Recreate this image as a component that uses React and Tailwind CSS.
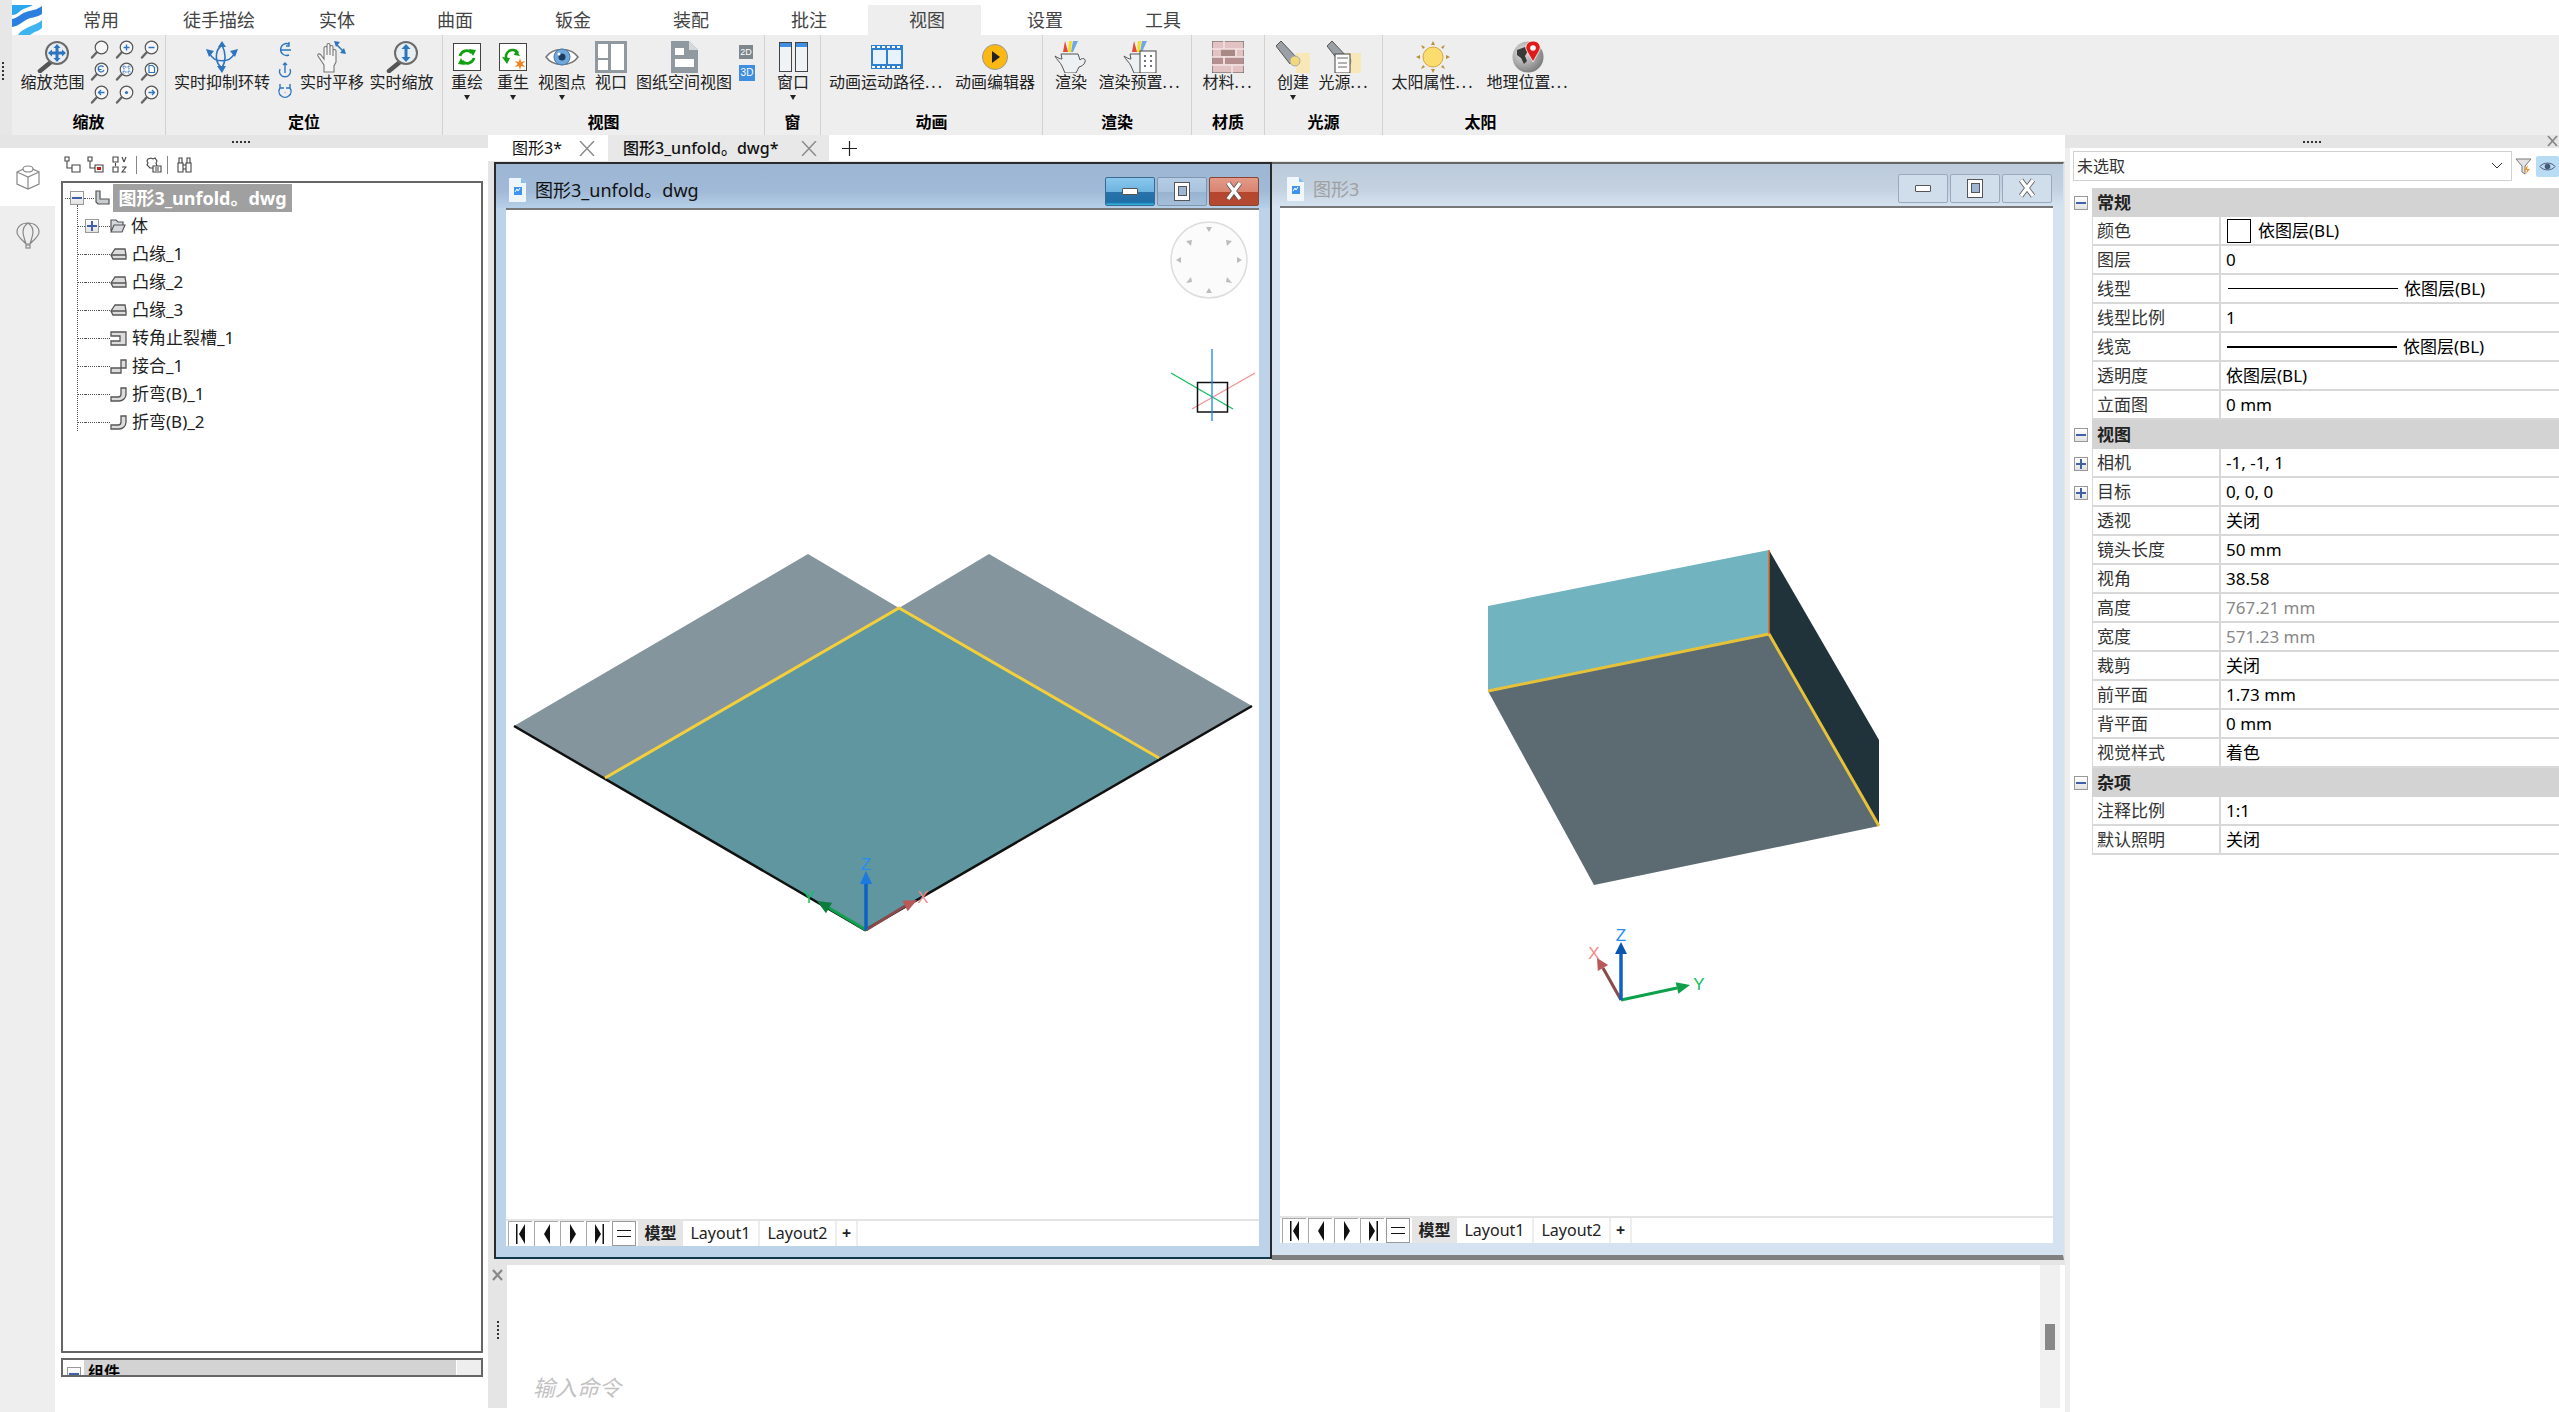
import React from "react";

const FONT = "font-['Noto_Sans','Noto_Sans_CJK_SC',sans-serif]";

// ---- small icons ----
const Mag = ({ children }) => (
  <svg width="19" height="19" viewBox="0 0 19 19">
    <line x1="7" y1="12" x2="2" y2="17.5" stroke="#666" strokeWidth="2.4" strokeLinecap="round" />
    <circle cx="11.5" cy="7.5" r="6.3" fill="#f6f6f6" stroke="#555" strokeWidth="1.2" />
    {children}
  </svg>
);

const smallMags = [
  null,
  <path d="M8.5 7.5h6M11.5 4.5v6" stroke="#2e75c0" strokeWidth="1.4" />,
  <path d="M8.5 7.5h6" stroke="#2e75c0" strokeWidth="1.5" />,
  <path d="M13.5 5a3 3 0 1 0 .5 3M8.5 4.5v3h3" fill="none" stroke="#2e75c0" strokeWidth="1.2" />,
  <path d="M7.5 5h8M7.5 10h8M9 3.5v8M14 3.5v8" stroke="#2e75c0" strokeWidth="1" strokeDasharray="1.5 1" />,
  <path d="M9 3.5h3.5l2 2v5H9z" fill="#fff" stroke="#2e75c0" strokeWidth="1.2" />,
  <path d="M14.5 7.5h-6M11 5l-2.5 2.5L11 10" fill="none" stroke="#2e75c0" strokeWidth="1.3" />,
  <circle cx="11.5" cy="7.5" r="1.6" fill="#2e75c0" />,
  <path d="M8.5 7.5h6M12 5l2.5 2.5L12 10" fill="none" stroke="#2e75c0" strokeWidth="1.3" />,
];

const BigZoom = () => (
  <svg width="34" height="32" viewBox="0 0 34 32">
    <line x1="15" y1="21" x2="4" y2="30" stroke="#555" strokeWidth="4.5" strokeLinecap="round" />
    <circle cx="21" cy="12" r="11" fill="#e9eef3" stroke="#6b6b6b" strokeWidth="2" />
    <path d="M21 3l3.5 4H22.5v3.5H26V8.500l4 3.500-4 3.500V13.500H22.500V17H24.500L21 21l-3.500-4H19.500V13.500H16V15.500L12 12l4-3.500V10.500H19.500V7H17.500z" fill="#2e75c0" />
  </svg>
);

const ZoomLive = () => (
  <svg width="34" height="32" viewBox="0 0 34 32">
    <line x1="15" y1="21" x2="4" y2="30" stroke="#555" strokeWidth="4.5" strokeLinecap="round" />
    <circle cx="21" cy="12" r="11" fill="#e9eef3" stroke="#6b6b6b" strokeWidth="2" />
    <path d="M21 3l4.500 5H22.500v8H25.500L21 21l-4.500-5H19.500V8H16.500z" fill="#2e75c0" />
  </svg>
);

const Orbit = () => (
  <svg width="36" height="32" viewBox="0 0 36 32">
    <path d="M18 4C10 10 11 22 18 27M18 4C22 12 22 20 18 27M6 13C10 22 26 22 30 13" fill="none" stroke="#2e75c0" strokeWidth="1.6" />
    <path d="M18 0l-4 6h8zM18 32l-5-7h9zM2 8l8 2-5 6zM34 8l-8 2 5 6z" fill="#2e75c0" />
  </svg>
);

const Hand = () => (
  <svg width="34" height="32" viewBox="0 0 34 32">
    <path d="M9 31V24L3 15c-1-2 1-3 3-1l3 4V7c0-2 3-2 3 0v7V4c0-2 3-2 3 0v10V6c0-2 3-2 3 0v9V10c0-2 3-2 3 0v11l-2 4v6z" fill="#f5f5f5" stroke="#777" strokeWidth="1.1" />
    <path d="M21 3l7 7" stroke="#2e75c0" strokeWidth="1.6" />
    <path d="M19 0l6 1-4 5zM31 13l-6-1 4-5z" fill="#2e75c0" />
  </svg>
);

const OrbitSmall = ({ kind }) => (
  <svg width="16" height="18" viewBox="0 0 16 18" fill="none" stroke="#2e75c0" strokeWidth="1.4">
    {kind === 0 && <path d="M12 3a6 6 0 1 0 0 11M3 9h11M12 1v4h-3" />}
    {kind === 1 && <path d="M8 1v10M3 7a5.500 5.500 0 1 0 10 0M6 3l2-2 2 2" />}
    {kind === 2 && <path d="M3 5a6 6 0 1 0 10 0M8 9v.5M3 1v4h4M13 1v4h-4" />}
  </svg>
);

const Regen = ({ star }) => (
  <svg width="28" height="28" viewBox="0 0 28 28">
    <rect x="0.500" y="0.500" width="27" height="27" fill="#fff" stroke="#444" />
    {star ? (
      <>
        <path d="M8 17a6.500 6.500 0 0 1 11-7" fill="none" stroke="#12a012" strokeWidth="2.6" />
        <path d="M3 14l8 1-3 6zM17 6l4 7-6-1z" fill="#12a012" />
        <path d="M21 15l1.200 4 4-1-2.800 3 2.800 3-4-1-1.200 4-1.200-4-4 1 2.800-3-2.800-3 4 1z" fill="#f58220" />
      </>
    ) : (
      <>
        <path d="M7 13a7 7 0 0 1 12-3M21 15a7 7 0 0 1-12 3" fill="none" stroke="#12a012" strokeWidth="2.8" />
        <path d="M16 6l7 1-3 6zM12 22l-7-1 3-6z" fill="#12a012" />
      </>
    )}
  </svg>
);

const Eye = () => (
  <svg width="34" height="24" viewBox="0 0 34 24">
    <path d="M1 12C8 2 26 2 33 12 26 22 8 22 1 12z" fill="#fff" stroke="#777" strokeWidth="1.5" />
    <circle cx="17" cy="12" r="8" fill="#6fa8dc" stroke="#4a77a6" />
    <circle cx="17" cy="12" r="3.500" fill="#1d3b5e" />
    <circle cx="14" cy="9" r="1.500" fill="#fff" />
  </svg>
);

const Viewports = () => (
  <svg width="32" height="32" viewBox="0 0 32 32">
    <rect width="32" height="32" fill="#8f999f" />
    <rect x="3" y="3" width="10" height="14" fill="#fff" />
    <rect x="3" y="19" width="10" height="10" fill="#fff" />
    <rect x="16" y="3" width="13" height="26" fill="#fff" />
  </svg>
);

const PaperView = () => (
  <svg width="27" height="32" viewBox="0 0 27 32">
    <path d="M0 0h18l9 9v23H0z" fill="#8f999f" />
    <path d="M18 0l9 9h-9z" fill="#d5d9dc" />
    <rect x="4" y="7" width="9" height="7" fill="#fff" />
    <rect x="4" y="18" width="19" height="8" fill="#fff" />
  </svg>
);

const WindowsIcon = () => (
  <svg width="29" height="30" viewBox="0 0 29 30">
    {[0, 16].map((x) => (
      <g key={x}>
        <rect x={x + 0.500} y="0.500" width="12" height="29" fill="#f0f3f6" stroke="#444" />
        <rect x={x + 1} y="1" width="11" height="4" fill="#3f8ee0" />
      </g>
    ))}
  </svg>
);

const Film = () => (
  <svg width="32" height="24" viewBox="0 0 32 24">
    <rect width="32" height="24" fill="#2f80d0" />
    <rect x="2" y="5" width="13" height="14" fill="#e8f2fb" />
    <rect x="17" y="5" width="13" height="14" fill="#e8f2fb" />
    {[1, 6, 11, 16, 21, 26].map((x) => (
      <g key={x}>
        <rect x={x} y="1" width="3" height="2" fill="#fff" />
        <rect x={x} y="21" width="3" height="2" fill="#fff" />
      </g>
    ))}
  </svg>
);

const Play = () => (
  <svg width="26" height="26" viewBox="0 0 26 26">
    <circle cx="13" cy="13" r="12.500" fill="#fbb813" stroke="#999" />
    <path d="M10 7l8 6-8 6z" fill="#222" />
  </svg>
);

const Teapot = ({ preset }) => (
  <svg width="34" height="32" viewBox="0 0 34 32">
    <path d="M11 0l3 11h-5z" fill="#e8483a" />
    <path d="M15 0h3l-1 11h-3z" fill="#f7e01a" />
    <path d="M19 0h5l-5 11h-2z" fill="#6ea6e8" />
    <path d="M7 13h17l2 6c3-3 6-1 5 2-1 3-3 4-6 5l-3 6H11L8 25c-1-3-6-7-7-10 3 2 5 3 7 3z" fill="#eef1f4" stroke="#555" />
    {preset && (
      <g>
        <rect x="17" y="10" width="16" height="22" fill="#fff" stroke="#444" />
        <path d="M21 15h2M27 15h2M21 20h2M27 20h2M21 25h2M27 25h2" stroke="#445" strokeWidth="1.500" />
      </g>
    )}
  </svg>
);

const Bricks = () => (
  <svg width="32" height="32" viewBox="0 0 32 32">
    <rect width="32" height="32" fill="#e2c2c2" stroke="#555" />
    <rect x="9" y="8" width="14" height="7" fill="#a78a85" />
    <rect x="1" y="16" width="10" height="7" fill="#b58f8f" />
    <rect x="13" y="16" width="18" height="7" fill="#b58f8f" />
    <path d="M0 8h32M0 16h32M0 24h32M12 0v8M24 8v8M12 16v8M20 24v8" stroke="#f3e3e3" strokeWidth="1.500" />
  </svg>
);

const Spot = ({ doc }) => (
  <svg width="34" height="32" viewBox="0 0 34 32">
    <rect x="20" y="12" width="14" height="20" fill="#f8e8b8" />
    <path d="M5 0L0 5l14 18 7-6z" fill="#9aa0a5" stroke="#555" />
    <circle cx="19" cy="20" r="5" fill="#f3d77a" stroke="#aaa" />
    {doc && (
      <g>
        <rect x="8" y="13" width="15" height="19" fill="#fff" stroke="#444" />
        <path d="M10 17h11M11 22h9M11 26h9" stroke="#666" />
      </g>
    )}
  </svg>
);

const Sun = () => (
  <svg width="34" height="32" viewBox="0 0 34 32">
    <circle cx="17" cy="16" r="10" fill="#fbdc6e" stroke="#d7a93a" />
    <path d="M17 0l2 4h-4zM17 32l-2-4h4zM0 16l4-2v4zM34 16l-4 2v-4zM5 4l4 2-2 2zM29 4l-2 4-2-2zM5 28l2-4 2 2zM29 28l-4-2 2-2z" fill="#b88f3a" />
  </svg>
);

const Globe = () => (
  <svg width="34" height="32" viewBox="0 0 34 32">
    <defs>
      <radialGradient id="gl" cx="0.350" cy="0.350" r="0.800">
        <stop offset="0" stopColor="#e4e4e4" />
        <stop offset="1" stopColor="#6e6e6e" />
      </radialGradient>
    </defs>
    <circle cx="17" cy="16" r="15.500" fill="url(#gl)" />
    <path d="M6 9l8-3 3 4-3 5 2 5-3 3-3-6-4-3z" fill="#3a3a3a" />
    <path d="M22 0c-5 0-8 4-7 8 1 3 5 9 7 13 2-4 6-10 7-13 1-4-2-8-7-8z" fill="#e01b1b" stroke="#fff" strokeWidth="0.800" />
    <circle cx="22" cy="7" r="2.800" fill="#fff" />
  </svg>
);

const DocIcon = ({ dim }) => (
  <svg width="18" height="24" viewBox="0 0 18 24">
    <path d="M1 0h11l5 5v18a1 1 0 0 1-1 1H1a1 1 0 0 1-1-1V1a1 1 0 0 1 1-1z" fill={dim ? "#f2f7fc" : "#eef5fd"} />
    <path d="M12 0l5 5h-5z" fill="#7dc0f5" />
    <rect x="5" y="9" width="8" height="8" fill="#3d93ef" />
    <path d="M6 14l2-3 1 2 2-3" stroke="#fff" fill="none" />
  </svg>
);

const Grip = () => (
  <div className="flex gap-[2px]">
    {[0, 1, 2, 3, 4].map((i) => (
      <span key={i} className="w-[2px] h-[2px] bg-[#333]" />
    ))}
  </div>
);

const Caret = () => <span className="block w-0 h-0 border-l-[3px] border-r-[3px] border-t-[5px] border-l-transparent border-r-transparent border-t-[#222]" />;

const Dots = () => <span className="tracking-[2px]">...</span>;

const Expander = ({ open }) => (
  <span className="relative flex items-center justify-center w-[14px] h-[14px] border border-[#999] bg-[linear-gradient(#ffffff,#e2e2e2)]">
    <span className="w-[10px] h-[2px] bg-[#4060a8]" />
    {!open && <span className="absolute w-[2px] h-[10px] bg-[#4060a8]" />}
  </span>
);

// ---- ribbon ----
const RibbonBtn = ({ w, icon, label, arrow }) => (
  <div className={`${w} flex flex-col items-center shrink-0`}>
    <div className="h-[32px] flex items-center justify-center">{icon}</div>
    <div className="text-[16px] leading-[20px] whitespace-nowrap text-[#222] mt-[-1px]">{label}</div>
    {arrow && (
      <div className="mt-[3px]">
        <Caret />
      </div>
    )}
  </div>
);

const Group = ({ w, label, pad, children, last }) => (
  <div className={`${w} flex flex-col ${last ? "" : "border-r border-[#d2d2d2]"}`}>
    <div className={`h-[76px] pt-[6px] flex ${pad}`}>{children}</div>
    <div className="h-[22px] leading-[22px] text-center text-[16px] font-bold text-black">{label}</div>
  </div>
);

const Ribbon = () => (
  <div className="h-[100px] flex bg-[#eeeeee]">
    <div className="w-[12px] bg-[#e7e7e7] flex flex-col items-start pl-[2px] pt-[27px] gap-[2px]">
      {[0, 1, 2, 3, 4].map((i) => (
        <span key={i} className="w-[2px] h-[2px] bg-[#333]" />
      ))}
    </div>
    <Group w="w-[154px]" label="缩放" pad="pl-[9px]">
      <RibbonBtn w="w-[63px]" label="缩放范围" icon={<BigZoom />} />
      <div className="grid grid-cols-3 gap-x-[6px] gap-y-[3px] ml-[6px] mt-[-1px] h-[64px]">
        {smallMags.map((g, i) => (
          <Mag key={i}>{g}</Mag>
        ))}
      </div>
    </Group>
    <Group w="w-[277px]" label="定位" pad="pl-[8px]">
      <RibbonBtn w="w-[96px]" label="实时抑制环转" icon={<Orbit />} />
      <div className="w-[30px] flex flex-col items-center gap-[3px]">
        <OrbitSmall kind={0} />
        <OrbitSmall kind={1} />
        <OrbitSmall kind={2} />
      </div>
      <RibbonBtn w="w-[64px]" label="实时平移" icon={<Hand />} />
      <div className="w-[6px]" />
      <RibbonBtn w="w-[63px]" label="实时缩放" icon={<ZoomLive />} />
    </Group>
    <Group w="w-[322px]" label="视图" pad="pl-[8px]">
      <RibbonBtn w="w-[32px]" label="重绘" arrow icon={<Regen />} />
      <div className="w-[14px]" />
      <RibbonBtn w="w-[32px]" label="重生" arrow icon={<Regen star />} />
      <div className="w-[9px]" />
      <RibbonBtn w="w-[48px]" label="视图点" arrow icon={<Eye />} />
      <div className="w-[9px]" />
      <RibbonBtn w="w-[32px]" label="视口" icon={<Viewports />} />
      <div className="w-[9px]" />
      <RibbonBtn w="w-[96px]" label="图纸空间视图" icon={<PaperView />} />
      <div className="flex flex-col items-start ml-[7px] mt-[4px] gap-[6px] font-['Liberation_Sans',sans-serif]">
        <span className="w-[14px] h-[14px] bg-[#7d868c] text-white text-[9px] leading-[14px] text-center">2D</span>
        <span className="w-[16px] h-[16px] bg-[#3f8ee0] text-white text-[10px] leading-[16px] text-center">3D</span>
      </div>
    </Group>
    <Group w="w-[56px]" label="窗" pad="pl-[12px]">
      <RibbonBtn w="w-[32px]" label="窗口" arrow icon={<WindowsIcon />} />
    </Group>
    <Group w="w-[222px]" label="动画" pad="pl-[6px]">
      <RibbonBtn w="w-[119px]" label={<>动画运动路径<Dots /></>} icon={<Film />} />
      <div className="w-[9px]" />
      <RibbonBtn w="w-[80px]" label="动画编辑器" icon={<Play />} />
    </Group>
    <Group w="w-[149px]" label="渲染" pad="pl-[12px]">
      <RibbonBtn w="w-[32px]" label="渲染" icon={<Teapot />} />
      <div className="w-[9px]" />
      <RibbonBtn w="w-[88px]" label={<>渲染预置<Dots /></>} icon={<Teapot preset />} />
    </Group>
    <Group w="w-[73px]" label="材质" pad="pl-[9px]">
      <RibbonBtn w="w-[54px]" label={<>材料<Dots /></>} icon={<Bricks />} />
    </Group>
    <Group w="w-[118px]" label="光源" pad="pl-[12px]">
      <RibbonBtn w="w-[32px]" label="创建" arrow icon={<Spot />} />
      <div className="w-[8px]" />
      <RibbonBtn w="w-[54px]" label={<>光源<Dots /></>} icon={<Spot doc />} />
    </Group>
    <Group w="w-[195px]" label="太阳" pad="pl-[7px]" last>
      <RibbonBtn w="w-[86px]" label={<>太阳属性<Dots /></>} icon={<Sun />} />
      <div className="w-[9px]" />
      <RibbonBtn w="w-[86px]" label={<>地理位置<Dots /></>} icon={<Globe />} />
    </Group>
  </div>
);

const tabs = ["常用", "徒手描绘", "实体", "曲面", "钣金", "装配", "批注", "视图", "设置", "工具"];

const TopTabs = () => (
  <div className="h-[35px] flex items-stretch bg-white">
    <div className="w-[12px] bg-[#e7e7e7]" />
    <div className="w-[30px] pt-[5px]">
      <svg width="30" height="30" viewBox="0 0 30 30">
        <path d="M0 0h21c-5 3-10 3-14 7-2 2-4 3-7 3z" fill="#2aa7ee" />
        <path d="M0 14c6-1 8-5 14-7 6-2 11-2 16-6v8c-6 4-11 3-16 6-5 3-8 6-14 7z" fill="#2a7fe0" />
        <path d="M6 30c3-5 9-7 13-9 4-2 8-3 11-6v8c-3 3-6 3-9 5-1 1-2 1-3 2z" fill="#3fb4f2" />
      </svg>
    </div>
    {tabs.map((t) => (
      <div
        key={t}
        className={
          t === "视图"
            ? "w-[113px] mr-[5px] pl-[5px] mt-[5px] bg-[#eeeeee] text-center text-[18px] leading-[30px] text-[#444]"
            : "w-[118px] mt-[5px] text-center text-[18px] leading-[30px] text-[#444]"
        }
      >
        {t}
      </div>
    ))}
  </div>
);

// ---- tree ----
const EdgeIcon = ({ kind }) => (
  <svg width="17" height="15" viewBox="0 0 17 15" fill="#dcdcdc" stroke="#555" strokeWidth="1.300">
    {kind === "flange" && <path d="M1 8l4-6h10l1 6v4H3z M1 8h15" />}
    {kind === "relief" && <path d="M1 1h15v13H1v-4h9V5H1z" />}
    {kind === "joint" && <path d="M11 1h5v8h-5v5H1v-5h10z" />}
    {kind === "bend" && <path d="M11 1h5v6c0 4-3 7-7 7H1v-4h7c2 0 3-1 3-3z" />}
  </svg>
);

const treeRows = [
  ["flange", "凸缘_1"],
  ["flange", "凸缘_2"],
  ["flange", "凸缘_3"],
  ["relief", "转角止裂槽_1"],
  ["joint", "接合_1"],
  ["bend", "折弯(B)_1"],
  ["bend", "折弯(B)_2"],
];

const TreeRow = ({ icon, label, expander }) => (
  <div className="relative h-[28px] flex items-center">
    <div className="w-[8px] ml-[12px] border-t border-dotted border-[#555]" />
    {expander || <div className="w-[14px] border-t border-dotted border-[#555]" />}
    <div className="w-[11px] border-t border-dotted border-[#555]" />
    {icon}
    <span className="ml-[5px] text-[17px] text-[#222] whitespace-nowrap">{label}</span>
  </div>
);

const TreeTool = ({ d, extra }) => (
  <svg width="17" height="17" viewBox="0 0 17 17" fill="#fff" stroke="#444" strokeWidth="1.100">
    <path d={d} />
    {extra}
  </svg>
);

const LeftPanel = () => (
  <div className="w-[488px] flex flex-col">
    <div className="h-[13px] bg-[#e5e5e5] flex items-center justify-center pr-[6px]">
      <Grip />
    </div>
    <div className="flex-1 flex">
      <div className="w-[55px] bg-[#eeeeee] flex flex-col">
        <div className="h-[58px] bg-white flex items-center justify-center">
          <svg width="24" height="26" viewBox="0 0 24 26" fill="none" stroke="#888" strokeWidth="1.200">
            <path d="M1 8l11-5 11 5v12l-11 5-11-5zM1 8l11 5 11-5M12 13v12" />
            <ellipse cx="12" cy="5" rx="5" ry="3" fill="#fff" />
          </svg>
        </div>
        <div className="h-[58px] flex items-center justify-center">
          <svg width="24" height="27" viewBox="0 0 24 27" fill="none" stroke="#888" strokeWidth="1.200">
            <path d="M12 1C5 1 1 5 1 10c0 5 7 9 9 12h4c2-3 9-7 9-12 0-5-4-9-11-9zM12 1c-3 2-5 5-5 9 0 4 2 8 3 12M12 1c3 2 5 5 5 9 0 4-2 8-3 12" />
            <rect x="10" y="23" width="4" height="3" />
          </svg>
        </div>
      </div>
      <div className="flex-1 bg-white pl-[6px] pr-[5px] flex flex-col">
        <div className="h-[33px] flex items-center pl-[3px]">
          <TreeTool d="M1 1h4v4H1zM3 5v7h5M8 9h8v7H8z" />
          <div className="w-[6px]" />
          <TreeTool d="M1 1h4v4H1zM3 5v7h5M8 9h8v7H8z" extra={<rect x="10" y="11" width="4" height="3" fill="#d01818" stroke="none" />} />
          <div className="w-[8px]" />
          <TreeTool d="M1 1h5v5H1zM1 11h5v5H1zM3.500 7v3" extra={<path d="M10 1l2 5M14 1l-2 5M10 11h4l-4 5h4" fill="none" />} />
          <div className="w-[8px] border-r border-[#888] h-[18px] mr-[8px]" />
          <TreeTool d="M3 3l3-1 2 1 2-1 2 3-1 2 1 3-3 2H5L2 9l1-2-1-2z" extra={<path d="M8 10h8v6H8zM10 12h4M10 14h4" />} />
          <div className="w-[6px] border-r border-[#888] h-[18px] mr-[8px]" />
          <TreeTool d="M3 2h3v5H3zM11 2h3v5h-3zM2 7h5v9H2zM10 7h5v9h-5zM7 9h3v4H7z" />
        </div>
        <div className="relative h-[1172px] border-2 border-[#666] px-[2px] pt-[1px]">
          <div className="absolute left-[14px] top-[22px] h-[226px] border-l border-dotted border-[#555]" />
          <div className="relative h-[28px] flex items-center">
            <div className="w-[5px] border-t border-dotted border-[#555]" />
            <Expander open />
            <div className="w-[10px] border-t border-dotted border-[#555]" />
            <svg width="16" height="16" viewBox="0 0 16 16" fill="#c9cdd2" stroke="#555" strokeWidth="1.200">
              <path d="M2 1h4v8h9v5H4l-2-2z" />
            </svg>
            <span className="ml-[3px] h-[28px] w-[179px] bg-[#a0a0a0] text-white text-[18px] font-bold leading-[28px] text-center whitespace-nowrap">
              图形3_unfold。dwg
            </span>
          </div>
          <TreeRow
            expander={<Expander />}
            label="体"
            icon={
              <svg width="16" height="14" viewBox="0 0 16 14" fill="#d5d9de" stroke="#555" strokeWidth="1.200">
                <path d="M1 12V1h5l2 2h5v3M1 13l3-7h11l-3 7z" />
              </svg>
            }
          />
          {treeRows.map(([k, l]) => (
            <TreeRow key={l} label={l} icon={<EdgeIcon kind={k} />} />
          ))}
        </div>
        <div className="h-[5px]" />
        <div className="h-[19px] border-2 border-[#666] flex overflow-hidden">
          <div className="w-[21px] pl-[4px] pt-[7px]">
            <Expander open />
          </div>
          <div className="w-[372px] bg-[#d3d3d3] pl-[4px] text-[16px] font-bold leading-[24px] text-black">组件</div>
          <div className="flex-1 bg-[#eeeeee] border-l border-white" />
        </div>
      </div>
    </div>
  </div>
);

// ---- windows ----
const WinBtn = ({ cls, children }) => <div className={`w-[50px] h-[29px] flex items-center justify-center rounded-[2px] border ${cls}`}>{children}</div>;

const Glyph = {
  min: <span className="w-[16px] h-[7px] bg-white border border-[#555] rounded-[1px]" />,
  max: (
    <span className="w-[16px] h-[19px] bg-white border border-[#555] flex items-center justify-center">
      <span className="w-[9px] h-[10px] bg-[#9db6d3] border border-[#555]" />
    </span>
  ),
  close: (
    <svg width="18" height="20" viewBox="0 0 18 20">
      <path d="M3 2l12 16M15 2L3 18" stroke="#555" strokeWidth="5" fill="none" />
      <path d="M3 2l12 16M15 2L3 18" stroke="#fff" strokeWidth="3.500" fill="none" />
    </svg>
  ),
};

const NavBtn = ({ d }) => (
  <div className="w-[24px] h-[25px] mr-[2px] border-l border-t border-[#a8a8a8] bg-white flex items-center justify-center">
    <svg width="12" height="20" viewBox="0 0 12 20">
      <path d={d} fill="#111" />
    </svg>
  </div>
);

const SheetBar = () => (
  <div className={`h-[27px] shrink-0 bg-white border-t-2 border-[#e4e4e4] flex items-stretch text-[16px] leading-[25px] text-[#222] ${FONT}`}>
    <div className="w-[2px]" />
    <NavBtn d="M1 0h1.500v20H1zM10 0v20L4 10z" />
    <NavBtn d="M9 0v20L3 10z" />
    <NavBtn d="M3 0v20l6-10z" />
    <NavBtn d="M11 0h-1.500v20H11zM2 0v20l6-10z" />
    <div className="w-[24px] mr-[2px] border border-[#999] flex flex-col justify-center px-[4px] gap-[5px]">
      <span className="h-[1px] bg-[#111]" />
      <span className="h-[1px] bg-[#111]" />
    </div>
    <div className="w-[45px] bg-[#e5e5e5] text-center font-bold">模型</div>
    <div className="w-[77px] border-r-2 border-[#eeeeee] text-center">Layout1</div>
    <div className="w-[77px] border-r-2 border-[#eeeeee] text-center">Layout2</div>
    <div className="w-[21px] border-r-2 border-[#eeeeee] text-center font-bold">+</div>
  </div>
);

// arrow head from a base point to a tip, half width w
const headPoints = (b, t, w) => {
  const dx = t[0] - b[0];
  const dy = t[1] - b[1];
  const len = Math.hypot(dx, dy);
  const nx = (-dy / len) * w;
  const ny = (dx / len) * w;
  return `${b[0] + nx},${b[1] + ny} ${t[0]},${t[1]} ${b[0] - nx},${b[1] - ny}`;
};

const Triad = ({ o, z, zt, x, xt, y, yt, zl, xl, yl, yFill, zFill }) => (
  <g fontFamily="Liberation Sans, sans-serif" fontSize="17">
    <line x1={o[0]} y1={o[1]} x2={x[0]} y2={x[1]} stroke="#8a4a4a" strokeWidth="3" />
    <line x1={o[0]} y1={o[1]} x2={y[0]} y2={y[1]} stroke="#0ea04a" strokeWidth="3" />
    <line x1={o[0]} y1={o[1]} x2={z[0]} y2={z[1]} stroke="#0a62c4" strokeWidth="3.500" />
    <polygon points={headPoints(x, xt, 6)} fill="#b85a5a" />
    <polygon points={headPoints(y, yt, 6)} fill={yFill} />
    <polygon points={headPoints(z, zt, 6)} fill={zFill} />
    <text x={zl[0]} y={zl[1]} fill="#2a8cf0" textAnchor="middle">Z</text>
    <text x={xl[0]} y={xl[1]} fill="#f28a8a" textAnchor="middle">X</text>
    <text x={yl[0]} y={yl[1]} fill="#10c060" textAnchor="middle">Y</text>
  </g>
);

const ringArrows = [
  "M1209 231l-3 -5h6z",
  "M1209 287l-3 5h6z",
  "M1176 259l5 -3v6z",
  "M1242 259l-5 -3v6z",
  "M1186 240l6 -1-1 6z",
  "M1232 240l-6 -1 1 6z",
  "M1186 282l6 -1-1 -5z",
  "M1232 282l-6 -1 1 -5z",
];

const LeftView = () => (
  <svg className="absolute inset-0" width="753" height="1011" viewBox="506 209 753 1011">
    <path d="M514 725L808 553 899 607 989 553 1252 705 865 929z" fill="#85959e" />
    <path d="M605 777L899 607 1159 757 865 929z" fill="#5f96a0" />
    <path d="M514 725L865 929 1252 705" fill="none" stroke="#111" strokeWidth="2.500" />
    <path d="M605 777L899 607 1159 757" fill="none" stroke="#f2cf3b" strokeWidth="3" />
    <Triad o={[866, 929]} z={[866, 883]} zt={[866, 870]} x={[905, 905]} xt={[917, 899]} y={[829, 907]} yt={[817, 900]} zl={[866, 869]} xl={[923, 902]} yl={[809, 902]} yFill="#0b7c3e" zFill="#1a7ae0" />
    <circle cx="1209" cy="259" r="38" fill="#fbfbfb" stroke="#dddddd" strokeWidth="1.500" />
    {ringArrows.map((d) => (
      <path key={d} d={d} fill="#bcbcbc" />
    ))}
    <line x1="1171" y1="372" x2="1233" y2="408" stroke="#10c060" strokeWidth="1.300" />
    <line x1="1192" y1="408" x2="1255" y2="372" stroke="#f78f8f" strokeWidth="1.300" />
    <rect x="1197.500" y="381.500" width="30" height="29.500" fill="none" stroke="#111" strokeWidth="1.500" />
    <line x1="1212" y1="348" x2="1212" y2="420" stroke="#1b84ee" strokeWidth="1.300" />
  </svg>
);

const RightView = () => (
  <svg className="absolute inset-0" width="773" height="1011" viewBox="1280 206 773 1011">
    <path d="M1488 604L1769 548 1769 632 1488 689z" fill="#71b3bf" />
    <path d="M1488 689L1769 632 1879 824 1594 883z" fill="#5c6a71" />
    <path d="M1769 548L1879 738 1879 824 1769 632z" fill="#21333a" />
    <path d="M1488 689L1769 632 1879 824" fill="none" stroke="#e6c23a" strokeWidth="3" />
    <line x1="1769" y1="548" x2="1769" y2="632" stroke="#e06a2a" strokeWidth="1.500" />
    <Triad o={[1621, 998]} z={[1621, 952]} zt={[1621, 940]} x={[1603, 966]} xt={[1597, 956]} y={[1677, 986]} yt={[1690, 983]} zl={[1621, 939]} xl={[1594, 957]} yl={[1699, 988]} yFill="#0ea04a" zFill="#0a55b0" />
  </svg>
);

const DocWindow = ({ active, title, view }) => {
  const frame = active
    ? "w-[778px] h-[1097px] bg-[#bcd3ea] border-2 border-[#2a2a2a] border-b-[#10384a]"
    : "w-[792px] h-[1098px] bg-[#d5e3f1] border-t-2 border-t-[#666] border-b-[5px] border-b-[#808080] border-r border-r-[#d5e3f1]";
  const head = active
    ? "h-[44px] bg-[linear-gradient(#9db6d3,#9fb9d6_60%,#b6d0e9)] pl-[11px] pr-[11px] text-[#111]"
    : "h-[42px] bg-[linear-gradient(#bccbdb,#c3d1e0_60%,#d5e3f1)] pl-[13px] pr-[11px] text-[#a0a0a0]";
  const body = active ? "ml-[10px] mr-[11px] mb-[11px]" : "ml-[8px] mr-[10px] mb-[12px]";
  const btns = active ? "pt-[10px]" : "pt-[6px]";
  return (
    <div className={`${frame} flex flex-col shrink-0`}>
      <div className={`${head} flex items-center justify-between shrink-0`}>
        <div className="flex items-center gap-[8px] text-[18px] pl-[2px] pt-[8px]">
          <DocIcon dim={!active} />
          <span>{title}</span>
        </div>
        <div className={`flex gap-[2px] ${btns}`}>
          <WinBtn cls={active ? "border-[#3a6a92] bg-[linear-gradient(#8ac8ee_0%,#6db4e0_50%,#2a72a9_50%,#1f6fa8_90%,#33c0e8_100%)]" : "border-[#9aa9bb] bg-[#d0ddea]"}>{Glyph.min}</WinBtn>
          <WinBtn cls={active ? "border-[#7f96b0] bg-[linear-gradient(#b5cce6_0%,#aac3de_50%,#97b2cf_50%,#a5bfdb_100%)]" : "border-[#9aa9bb] bg-[#d0ddea]"}>{Glyph.max}</WinBtn>
          <WinBtn cls={active ? "border-[#8a4434] bg-[linear-gradient(#e39a88_0%,#d98572_50%,#b8452c_50%,#b34a33_100%)]" : "border-[#9aa9bb] bg-[#d0ddea]"}>{Glyph.close}</WinBtn>
        </div>
      </div>
      <div className={`flex-1 bg-white border-t-2 border-[#777] flex flex-col ${body}`}>
        <div className="relative flex-1 overflow-hidden">{view}</div>
        <SheetBar />
      </div>
    </div>
  );
};

const Center = () => (
  <div className="w-[1577px] flex flex-col">
    <div className="h-[26px] bg-white flex pl-[7px] text-[16px] leading-[26px] text-[#111]">
      <div className="w-[111px] pl-[17px] flex items-center">
        <span className="w-[65px]">图形3*</span>
        <span className="text-[#888] ml-[2px]">
          <svg width="16" height="15" viewBox="0 0 16 15">
            <path d="M1 0l14 15M15 0L1 15" stroke="currentColor" strokeWidth="1.400" />
          </svg>
        </span>
      </div>
      <div className="w-[221px] ml-[2px] bg-[#e8e8e8] pl-[15px] flex items-center">
        <span className="w-[178px] whitespace-nowrap font-medium">图形3_unfold。dwg*</span>
        <svg className="text-[#888]" width="16" height="15" viewBox="0 0 16 15">
          <path d="M1 0l14 15M15 0L1 15" stroke="currentColor" strokeWidth="1.400" />
        </svg>
      </div>
      <div className="w-[38px] ml-[1px] flex items-center justify-center">
        <svg width="15" height="15" viewBox="0 0 15 15">
          <path d="M7.500 0v15M0 7.500h15" stroke="#222" strokeWidth="1.200" />
        </svg>
      </div>
    </div>
    <div className="h-[1104px] bg-[#e5e5e5] flex items-start pl-[6px] pt-[1px]">
      <DocWindow active title="图形3_unfold。dwg" view={<LeftView />} />
      <DocWindow title="图形3" view={<RightView />} />
    </div>
    <div className="h-[143px] flex">
      <div className="w-[19px] bg-[#e5e5e5] flex flex-col items-center pt-[4px]">
        <svg width="11" height="12" viewBox="0 0 11 12">
          <path d="M1 1l9 10M10 1L1 11" stroke="#888" strokeWidth="2.200" />
        </svg>
        <div className="mt-[40px] flex flex-col gap-[2px]">
          {[0, 1, 2, 3, 4].map((i) => (
            <span key={i} className="w-[2px] h-[2px] bg-[#333]" />
          ))}
        </div>
      </div>
      <div className="flex-1 bg-white flex flex-col justify-end pb-[4px] pl-[26px] text-[22px] italic text-[#c2c2c2]">输入命令</div>
      <div className="w-[20px] bg-[#f0f0f0] flex items-center justify-center">
        <div className="w-[10px] h-[26px] bg-[#888888]" />
      </div>
      <div className="w-[5px] bg-white" />
    </div>
    <div className="flex-1 bg-white" />
  </div>
);

// ---- properties ----
const LineValue = ({ thick }) => (
  <span className="flex items-center">
    <span className={thick ? "w-[170px] h-[2px] ml-[1px] bg-black" : "w-[170px] h-[1px] ml-[2px] bg-black"} />
    <span className="ml-[6px]">依图层(BL)</span>
  </span>
);

const propSections = [
  {
    title: "常规",
    rows: [
      ["颜色", "swatch"],
      ["图层", "0"],
      ["线型", "line"],
      ["线型比例", "1"],
      ["线宽", "thick"],
      ["透明度", "依图层(BL)"],
      ["立面图", "0 mm"],
    ],
  },
  {
    title: "视图",
    rows: [
      ["相机", "-1, -1, 1", "plus"],
      ["目标", "0, 0, 0", "plus"],
      ["透视", "关闭"],
      ["镜头长度", "50 mm"],
      ["视角", "38.58"],
      ["高度", "767.21 mm", "dim"],
      ["宽度", "571.23 mm", "dim"],
      ["裁剪", "关闭"],
      ["前平面", "1.73 mm"],
      ["背平面", "0 mm"],
      ["视觉样式", "着色"],
    ],
  },
  {
    title: "杂项",
    rows: [
      ["注释比例", "1:1"],
      ["默认照明", "关闭"],
    ],
  },
];

const PropValue = ({ v }) => {
  if (v === "line") return <LineValue />;
  if (v === "thick") return <LineValue thick />;
  if (v === "swatch")
    return (
      <span className="flex items-center">
        <span className="w-[24px] h-[24px] ml-[1px] border border-black bg-white" />
        <span className="ml-[7px]">依图层(BL)</span>
      </span>
    );
  return v;
};

const RightPanel = () => (
  <div className="w-[494px] flex flex-col">
    <div className="h-[13px] bg-[#e5e5e5] relative flex items-center justify-center">
      <Grip />
      <svg className="absolute right-[1px] top-[0px]" width="11" height="12" viewBox="0 0 11 12">
        <path d="M1 1l9 10M10 1L1 11" stroke="#888" strokeWidth="1.800" />
      </svg>
    </div>
    <div className="flex-1 flex">
      <div className="w-[5px] bg-[#eeeeee]" />
      <div className="flex-1 bg-white flex flex-col text-[17px] text-black">
        <div className="h-[40px] flex items-start pt-[3px] pl-[3px]">
          <div className="w-[439px] h-[30px] border border-[#d0d0d0] flex items-center justify-between px-[3px] text-[16px] text-[#333]">
            <span>未选取</span>
            <svg className="mr-[5px]" width="12" height="8" viewBox="0 0 12 8">
              <path d="M1 1l5 5 5-5" fill="none" stroke="#333" />
            </svg>
          </div>
          <svg className="ml-[3px] mt-[7px]" width="17" height="17" viewBox="0 0 17 17">
            <path d="M1 1h15l-6 7v8l-3-2V8z" fill="#e4e4e4" stroke="#777" />
            <path d="M13 7l-4 5h3l-1 4 4-5h-3z" fill="#f7941d" />
          </svg>
          <div className="ml-[4px] mt-[5px] w-[23px] h-[21px] rounded-[2px] bg-[#b9dcf5] flex items-center justify-center">
            <svg width="17" height="11" viewBox="0 0 17 11">
              <path d="M1 5.500C4 1 13 1 16 5.500 13 10 4 10 1 5.500z" fill="none" stroke="#557" />
              <circle cx="8.500" cy="5.500" r="2.800" fill="#445a78" />
            </svg>
          </div>
        </div>
        {propSections.map((s) => (
          <div key={s.title}>
            <div className="h-[29px] flex">
              <div className="w-[22px] flex items-center pl-[4px]">
                <Expander open />
              </div>
              <div className="flex-1 bg-[#d3d3d3] pl-[5px] leading-[29px] font-bold text-[#222]">{s.title}</div>
            </div>
            {s.rows.map(([name, value, flag]) => (
              <div key={name} className="h-[29px] flex">
                <div className="w-[22px] flex items-center pl-[4px]">{flag === "plus" && <Expander />}</div>
                <div className="flex-1 grid grid-cols-[128px_1fr] border-l border-b-2 border-[#d8d8d8]">
                  <div className="pl-[4px] leading-[27px] text-[#333] border-r-2 border-[#d8d8d8]">{name}</div>
                  <div className={flag === "dim" ? "pl-[5px] leading-[27px] text-[#888] flex items-center" : "pl-[5px] leading-[27px] flex items-center"}>
                    <PropValue v={value} />
                  </div>
                </div>
              </div>
            ))}
          </div>
        ))}
      </div>
    </div>
  </div>
);

export default function App() {
  return (
    <div className={`w-[2559px] h-[1412px] overflow-hidden flex flex-col bg-white ${FONT}`}>
      <TopTabs />
      <Ribbon />
      <div className="flex-1 flex">
        <LeftPanel />
        <Center />
        <RightPanel />
      </div>
    </div>
  );
}
